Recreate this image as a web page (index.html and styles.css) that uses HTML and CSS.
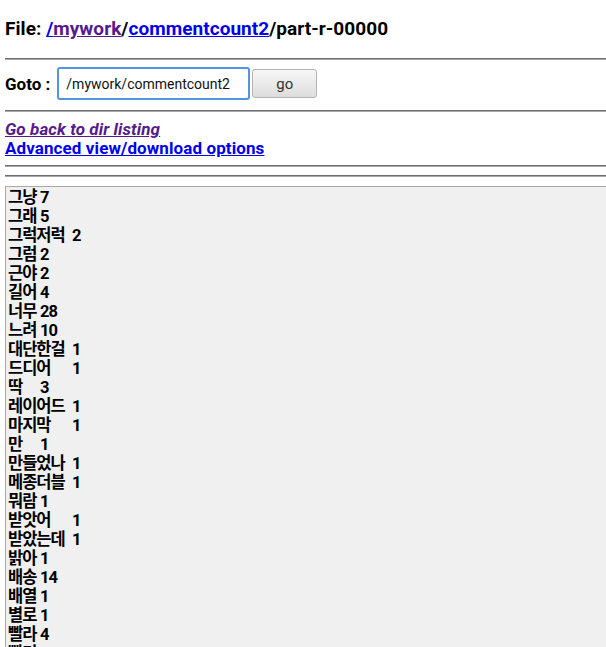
FILE: index.html
```html
<!DOCTYPE html>
<html lang="ko">
<head>
<meta charset="utf-8">
<title>part-r-00000</title>
<link rel="stylesheet" href="styles.css">
</head>
<body>
<h1 class="title">File: <a class="lnk" href="#">/</a><a class="lnk visited" href="#">mywork</a>/<a class="lnk" href="#">commentcount2</a>/part-r-00000</h1>
<hr class="rule">
<form class="goto">
  <label class="goto-label" for="dir">Goto :</label>
  <input class="goto-input" id="dir" type="text" value="/mywork/commentcount2">
  <button class="goto-btn" type="button">go</button>
</form>
<hr class="rule">
<div class="links">
  <a class="lnk visited italic" href="#">Go back to dir listing</a><br>
  <a class="lnk" href="#">Advanced view/download options</a>
</div>
<hr class="rule">
<hr class="rule second">
<textarea class="content" readonly>그냥&#9;7
그래&#9;5
그럭저럭&#9;2
그럼&#9;2
근야&#9;2
길어&#9;4
너무&#9;28
느려&#9;10
대단한걸&#9;1
드디어&#9;1
딱&#9;3
레이어드&#9;1
마지막&#9;1
만&#9;1
만들었나&#9;1
메종더블&#9;1
뭐람&#9;1
받앗어&#9;1
받았는데&#9;1
밝아&#9;1
배송&#9;14
배열&#9;1
별로&#9;1
빨라&#9;4
빨리&#9;1
사이즈&#9;3
생각&#9;2</textarea>
</body>
</html>
```

FILE: styles.css
```css
html {
  overflow: hidden;
  background: #fff;
}

body {
  margin: 0;
  padding: 0 0 0 5px;
  font-family: Roboto, "Noto Sans CJK KR", sans-serif;
  color: #000;
}

.title {
  margin: 17px 0 17px;
  font-size: 19px;
  line-height: 24px;
  font-weight: bold;
  letter-spacing: 0.05px;
}

.lnk {
  color: #0000ee;
  text-decoration: underline;
}

.lnk.visited {
  color: #551a8b;
}

.italic {
  font-style: italic;
}

.rule {
  display: block;
  height: 0;
  margin: 0;
  border: 0;
  border-top: 1px solid #6f6f6f;
  border-bottom: 1px solid #a8a8a8;
}

.rule.second {
  margin-top: 8px;
}

.goto {
  display: flex;
  align-items: center;
  margin: 7px 0 10px;
}

.goto-label {
  font-size: 17px;
  font-weight: bold;
  margin-right: 7px;
}

.goto-input {
  box-sizing: border-box;
  width: 193px;
  height: 33px;
  margin: 0;
  padding: 0 0 0 7px;
  border: 2px solid #5294e2;
  border-radius: 3px;
  background: #fff;
  font-family: Roboto, sans-serif;
  font-size: 14px;
  color: #111;
  outline: none;
}

.goto-btn {
  box-sizing: border-box;
  width: 65px;
  height: 29px;
  margin: 0 0 0 2px;
  padding: 0;
  border: 1px solid #b4b4b4;
  border-radius: 3px;
  background: linear-gradient(#f7f7f7, #dddddd);
  font-family: Roboto, sans-serif;
  font-size: 15px;
  color: #333;
}

.links {
  margin: 8px 0 7px;
  font-size: 17px;
  line-height: 19px;
  font-weight: bold;
  letter-spacing: 0.1px;
}

.content {
  display: block;
  box-sizing: border-box;
  width: 700px;
  height: 600px;
  margin: 9px 0 0;
  padding: 1px 2px;
  border: 1px solid #a9a9a9;
  background: #f0f0f0;
  font-family: Roboto, "Noto Sans CJK KR", sans-serif;
  font-size: 16.5px;
  font-weight: bold;
  line-height: 19px;
  letter-spacing: -1px;
  tab-size: 32px;
  -moz-tab-size: 32px;
  color: #000;
  resize: none;
  overflow: hidden;
  white-space: pre;
}
```
